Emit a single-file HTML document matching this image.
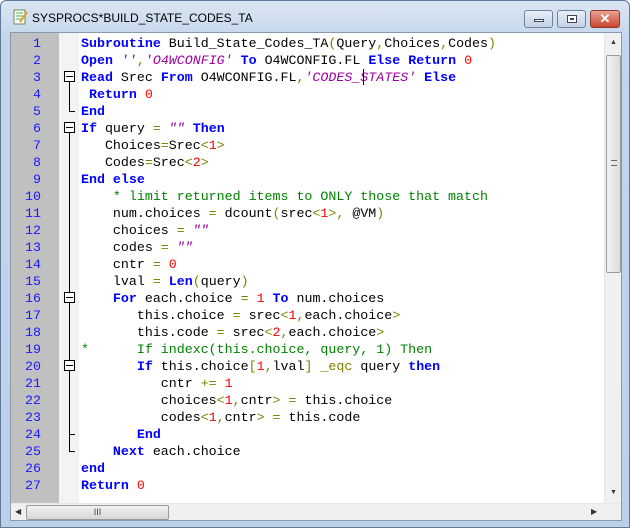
<!DOCTYPE html><html><head><style>
*{margin:0;padding:0;box-sizing:border-box}
body{width:630px;height:528px;overflow:hidden;background:#fff;font-family:"Liberation Sans",sans-serif}
#win{position:absolute;left:0;top:0;width:630px;height:528px;background:linear-gradient(#dbe6f3,#c3d5ea 40px,#bcd0e8);border:1px solid #5f7a99;border-radius:6px 6px 0 0}
#title{position:absolute;left:31px;top:10px;font-size:12px;color:#000}
#ed{position:absolute;left:9px;top:31px;width:612px;height:489px;background:#fff;border:1px solid #8a9aae;overflow:hidden}
#gut{position:absolute;left:0;top:0;width:48px;height:470px;background:#c0c0c0}
#fold{position:absolute;left:48px;top:0;width:20px;height:470px;background:#f3f3f3}
.ln{position:absolute;left:0;width:30px;text-align:right;color:#1a1aff;font:13.3px/17px "Liberation Mono",monospace}
.cl{position:absolute;left:70px;white-space:pre;font:13.3px/17px "Liberation Mono",monospace;color:#000}
.k{color:#0000ff;font-weight:bold}.s{color:#a000a0;font-style:italic}.n{color:#ff0000}.o{color:#808000}.c{color:#008000}
.box{position:absolute;left:53px;width:11px;height:11px;border:1px solid #000;background:#fff}
.box:after{content:"";position:absolute;left:1px;top:4px;width:7px;height:1px;background:#000}
.vl{position:absolute;left:58px;width:1px;background:#000}
.hl{position:absolute;left:58px;width:6px;height:1px;background:#000}
#vs{position:absolute;left:593px;top:0;width:17px;height:470px;background:#f0f0f0;border-left:1px solid #e6e6e6}
#vth{position:absolute;left:1px;top:22px;width:15px;height:218px;border:1px solid #9a9a9a;border-radius:2px;background:linear-gradient(90deg,#f2f2f2,#dcdcdc)}
#hs{position:absolute;left:0;top:470px;width:610px;height:17px;background:#f0f0f0;border-top:1px solid #e6e6e6}
#hth{position:absolute;left:15px;top:1px;width:143px;height:15px;border:1px solid #9a9a9a;border-radius:2px;background:linear-gradient(#f2f2f2,#d6d6d6);font-size:9px;text-align:center;color:#444;line-height:13px}
.btn{position:absolute;top:9px;height:18px;border:1px solid #6d84a0;border-radius:3px;background:linear-gradient(#e8eef6,#c3d2e5)}
</style></head><body>
<div id="win">
<svg style="position:absolute;left:11px;top:8px" width="16" height="16"><rect x="2" y="1" width="11" height="14" fill="#fff" stroke="#6a8a5a"/><line x1="4" y1="4" x2="11" y2="4" stroke="#4a4"/><line x1="4" y1="7" x2="11" y2="7" stroke="#4a4"/><line x1="4" y1="10" x2="11" y2="10" stroke="#4a4"/><line x1="8" y1="13" x2="15" y2="3" stroke="#e0a020" stroke-width="2"/></svg>
<div id="title">SYSPROCS*BUILD_STATE_CODES_TA</div>
<div class="btn" style="left:523px;width:29px"><div style="position:absolute;left:9px;top:8px;width:10px;height:3px;background:#fff;border:1px solid #445"></div></div>
<div class="btn" style="left:556px;width:29px"><div style="position:absolute;left:9px;top:4px;width:10px;height:8px;border:1px solid #445;background:#fff"><div style="margin:2px;height:2px;background:#445"></div></div></div>
<div class="btn" style="left:589px;width:30px;background:linear-gradient(#e9a393,#c9452e);border-color:#8a3a2a;color:#fff;font-weight:bold;font-size:13px;text-align:center;line-height:16px">✕</div>
<div id="ed">
<div id="gut"></div><div id="fold"></div>
<div class="ln" style="top:2px">1</div><div class="ln" style="top:19px">2</div><div class="ln" style="top:36px">3</div><div class="ln" style="top:53px">4</div><div class="ln" style="top:70px">5</div><div class="ln" style="top:87px">6</div><div class="ln" style="top:104px">7</div><div class="ln" style="top:121px">8</div><div class="ln" style="top:138px">9</div><div class="ln" style="top:155px">10</div><div class="ln" style="top:172px">11</div><div class="ln" style="top:189px">12</div><div class="ln" style="top:206px">13</div><div class="ln" style="top:223px">14</div><div class="ln" style="top:240px">15</div><div class="ln" style="top:257px">16</div><div class="ln" style="top:274px">17</div><div class="ln" style="top:291px">18</div><div class="ln" style="top:308px">19</div><div class="ln" style="top:325px">20</div><div class="ln" style="top:342px">21</div><div class="ln" style="top:359px">22</div><div class="ln" style="top:376px">23</div><div class="ln" style="top:393px">24</div><div class="ln" style="top:410px">25</div><div class="ln" style="top:427px">26</div><div class="ln" style="top:444px">27</div>
<div class="vl" style="top:48px;height:31px"></div><div class="hl" style="top:78px"></div>
<div class="vl" style="top:99px;height:320px"></div><div class="hl" style="top:401px"></div><div class="hl" style="top:418px"></div>
<div class="box" style="top:38px"></div><div class="box" style="top:89px"></div><div class="box" style="top:259px"></div><div class="box" style="top:327px"></div>
<div class="cl" style="top:2px"><span class="k">Subroutine</span> Build_State_Codes_TA<span class="o">(</span>Query<span class="o">,</span>Choices<span class="o">,</span>Codes<span class="o">)</span></div>
<div class="cl" style="top:19px"><span class="k">Open</span> <span class="s">''</span><span class="o">,</span><span class="s">'O4WCONFIG'</span> <span class="k">To</span> O4WCONFIG.FL <span class="k">Else</span> <span class="k">Return</span> <span class="n">0</span></div>
<div class="cl" style="top:36px"><span class="k">Read</span> Srec <span class="k">From</span> O4WCONFIG.FL<span class="o">,</span><span class="s">'CODES_STATES'</span> <span class="k">Else</span></div>
<div class="cl" style="top:53px"> <span class="k">Return</span> <span class="n">0</span></div>
<div class="cl" style="top:70px"><span class="k">End</span></div>
<div class="cl" style="top:87px"><span class="k">If</span> query <span class="o">=</span> <span class="s">""</span> <span class="k">Then</span></div>
<div class="cl" style="top:104px">   Choices<span class="o">=</span>Srec<span class="o">&lt;</span><span class="n">1</span><span class="o">&gt;</span></div>
<div class="cl" style="top:121px">   Codes<span class="o">=</span>Srec<span class="o">&lt;</span><span class="n">2</span><span class="o">&gt;</span></div>
<div class="cl" style="top:138px"><span class="k">End else</span></div>
<div class="cl c" style="top:155px">    * limit returned items to ONLY those that match</div>
<div class="cl" style="top:172px">    num.choices <span class="o">=</span> dcount<span class="o">(</span>srec<span class="o">&lt;</span><span class="n">1</span><span class="o">&gt;,</span> @VM<span class="o">)</span></div>
<div class="cl" style="top:189px">    choices <span class="o">=</span> <span class="s">""</span></div>
<div class="cl" style="top:206px">    codes <span class="o">=</span> <span class="s">""</span></div>
<div class="cl" style="top:223px">    cntr <span class="o">=</span> <span class="n">0</span></div>
<div class="cl" style="top:240px">    lval <span class="o">=</span> <span class="k">Len</span><span class="o">(</span>query<span class="o">)</span></div>
<div class="cl" style="top:257px">    <span class="k">For</span> each.choice <span class="o">=</span> <span class="n">1</span> <span class="k">To</span> num.choices</div>
<div class="cl" style="top:274px">       this.choice <span class="o">=</span> srec<span class="o">&lt;</span><span class="n">1</span><span class="o">,</span>each.choice<span class="o">&gt;</span></div>
<div class="cl" style="top:291px">       this.code <span class="o">=</span> srec<span class="o">&lt;</span><span class="n">2</span><span class="o">,</span>each.choice<span class="o">&gt;</span></div>
<div class="cl c" style="top:308px">*      If indexc(this.choice, query, 1) Then</div>
<div class="cl" style="top:325px">       <span class="k">If</span> this.choice<span class="o">[</span><span class="n">1</span><span class="o">,</span>lval<span class="o">]</span> <span class="o">_eqc</span> query <span class="k">then</span></div>
<div class="cl" style="top:342px">          cntr <span class="o">+=</span> <span class="n">1</span></div>
<div class="cl" style="top:359px">          choices<span class="o">&lt;</span><span class="n">1</span><span class="o">,</span>cntr<span class="o">&gt;</span> <span class="o">=</span> this.choice</div>
<div class="cl" style="top:376px">          codes<span class="o">&lt;</span><span class="n">1</span><span class="o">,</span>cntr<span class="o">&gt;</span> <span class="o">=</span> this.code</div>
<div class="cl" style="top:393px">       <span class="k">End</span></div>
<div class="cl" style="top:410px">    <span class="k">Next</span> each.choice</div>
<div class="cl" style="top:427px"><span class="k">end</span></div>
<div class="cl" style="top:444px"><span class="k">Return</span> <span class="n">0</span></div>
<div style="position:absolute;left:352px;top:36px;width:1px;height:16px;background:#000"></div>
<div id="vs"><div style="position:absolute;left:5px;top:6px;font-size:7px;color:#333">▲</div><div id="vth"><div style="position:absolute;left:4px;top:104px;width:6px;height:6px;border-top:1px solid #666;border-bottom:1px solid #666"></div></div><div style="position:absolute;left:5px;top:456px;font-size:7px;color:#333">▼</div></div>
<div id="hs"><div style="position:absolute;left:4px;top:3px;font-size:8px;color:#333">◀</div><div id="hth">III</div><div style="position:absolute;left:580px;top:3px;font-size:8px;color:#333">▶</div></div>
</div></div>
</body></html>
